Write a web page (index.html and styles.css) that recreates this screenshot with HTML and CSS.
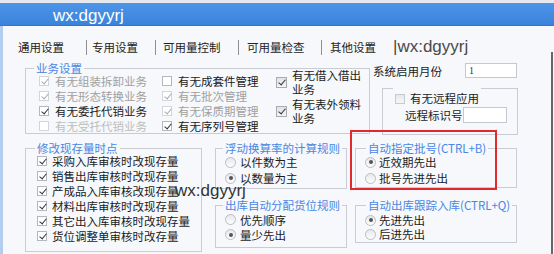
FILE: index.html
```html
<!DOCTYPE html>
<html lang="zh-CN">
<head>
<meta charset="utf-8">
<title>通用设置</title>
<link rel="stylesheet" href="styles.css">
</head>
<body>
<div class="strip"></div>
<div class="titlebar">wx:dgyyrj</div>
<div class="main">
  <div class="tabs">
    <span class="tab t1">通用设置</span><span class="sep"></span>
    <span class="tab t2">专用设置</span><span class="sep"></span>
    <span class="tab t3">可用量控制</span><span class="sep"></span>
    <span class="tab t4">可用量检查</span><span class="sep"></span>
    <span class="tab t5">其他设置</span>
    <span class="tab-wm">|wx:dgyyrj</span>
  </div>
  <div class="content">
    <div class="row-a">
      <fieldset class="grp biz">
        <legend>业务设置</legend>
        <div class="biz-grid">
          <div class="col">
            <div class="ck dis"><span class="cb on"></span>有无组装拆卸业务</div>
            <div class="ck dis"><span class="cb on"></span>有无形态转换业务</div>
            <div class="ck"><span class="cb on"></span>有无委托代销业务</div>
            <div class="ck dis light"><span class="cb"></span>有无受托代销业务</div>
          </div>
          <div class="col">
            <div class="ck"><span class="cb"></span>有无成套件管理</div>
            <div class="ck dis"><span class="cb on"></span>有无批次管理</div>
            <div class="ck dis"><span class="cb on"></span>有无保质期管理</div>
            <div class="ck"><span class="cb on"></span>有无序列号管理</div>
          </div>
          <div class="col c3">
            <div class="ck two"><span class="cb on big"></span><span>有无借入借出<br>业务</span></div>
            <div class="ck two"><span class="cb on big"></span><span>有无表外领料<br>业务</span></div>
          </div>
        </div>
      </fieldset>
      <div class="side">
        <div class="month"><span class="lbl">系统启用月份</span><span class="inp">1</span></div>
        <fieldset class="grp remote">
          <legend><span class="cb soft"></span>有无远程应用</legend>
          <div class="rid"><span class="lbl2">远程标识号</span><span class="inp w44"></span></div>
        </fieldset>
      </div>
    </div>
    <div class="row-b">
      <fieldset class="grp stock">
        <legend>修改现存量时点</legend>
        <div class="ck"><span class="cb on"></span>采购入库审核时改现存量</div>
        <div class="ck"><span class="cb on"></span>销售出库审核时改现存量</div>
        <div class="ck"><span class="cb on"></span>产成品入库审核改现存量</div>
        <div class="ck"><span class="cb on"></span>材料出库审核时改现存量</div>
        <div class="ck"><span class="cb on"></span>其它出入库审核时改现存量</div>
        <div class="ck"><span class="cb on"></span>货位调整单审核时改存量</div>
      </fieldset>
      <div class="mid">
        <fieldset class="grp float">
          <legend>浮动换算率的计算规则</legend>
          <div class="rd"><span class="rb"></span>以件数为主</div>
          <div class="rd"><span class="rb on"></span>以数量为主</div>
        </fieldset>
        <fieldset class="grp alloc">
          <legend>出库自动分配货位规则</legend>
          <div class="rd r14"><span class="rb"></span>优先顺序</div>
          <div class="rd r14"><span class="rb on"></span>量少先出</div>
        </fieldset>
      </div>
      <div class="rt">
        <fieldset class="grp batch">
          <legend>自动指定批号(CTRL+B)</legend>
          <div class="rd"><span class="rb on"></span>近效期先出</div>
          <div class="rd"><span class="rb"></span>批号先进先出</div>
        </fieldset>
        <fieldset class="grp track">
          <legend>自动出库跟踪入库(CTRL+Q)</legend>
          <div class="rd"><span class="rb on"></span>先进先出</div>
          <div class="rd"><span class="rb"></span>后进先出</div>
        </fieldset>
      </div>
    </div>
    <div class="mark"></div>
    <div class="wm">wx:dgyyrj</div>
  </div>
</div>
</body>
</html>
```
FILE: styles.css
```css
* { box-sizing: border-box; }
html, body { margin: 0; }
body {
  width: 554px;
  height: 254px;
  overflow: hidden;
  background: #f6f8fb;
  font-family: "Noto Sans CJK SC", "Microsoft YaHei", sans-serif;
  font-size: 11.5px;
  color: #1b1b1b;
}
.strip { height: 3px; background: #e6eaef; }
.titlebar {
  height: 23px;
  padding: 2px 0 0 53px;
  background: linear-gradient(#4d95e8, #3a83dc);
  border-bottom: 1px solid #3574c8;
  color: #fff;
  font: 17px/21px "Liberation Sans", sans-serif;
}
.main {
  height: 228px;
  display: flex;
  flex-direction: column;
  border-left: 3px solid #b3cdef;
}
.tabs {
  height: 26px;
  flex: none;
  display: flex;
  align-items: flex-start;
  padding: 13px 0 0 15px;
}
.tab { line-height: 16px; color: #222; }
.t1 { width: 68px; }
.t2 { width: 68px; padding-left: 5px; }
.t3 { width: 82px; padding-left: 7px; }
.t4 { width: 82px; padding-left: 8px; }
.t5 { width: 71px; padding-left: 8px; }
.sep { width: 1px; height: 15px; margin-top: 1px; background: #8f8f8f; }
.tab-wm { font: 17px/16px "Liberation Sans", sans-serif; color: #4a4a4a; }

.content {
  flex: 1;
  position: relative;
  margin-right: 1px;
  border-right: 2px solid #666;
  padding: 11px 0 0 22px;
}
.row-a { display: flex; align-items: flex-start; }
.row-b { display: flex; align-items: flex-start; margin-top: 8px; }

.grp {
  margin: 0;
  padding: 0;
  min-width: 0;
  border: 1px solid #c9cdd3;
}
.grp > legend {
  margin-left: 8px;
  padding: 0 2px;
  line-height: 10px;
  white-space: nowrap;
  color: #4a86e4;
}

.biz { width: 345px; }
.biz-grid {
  display: grid;
  grid-template-columns: 123px 114px 1fr;
  padding-left: 13px;
}
.ck {
  display: flex;
  align-items: center;
  gap: 6px;
  height: 15px;
  white-space: nowrap;
}
.cb {
  position: relative;
  flex: none;
  display: inline-block;
  width: 10px;
  height: 10px;
  border: 1px solid #b3b8bf;
  background: #fff;
}
.cb.on::after {
  content: "";
  position: absolute;
  left: 2.5px;
  top: 0;
  width: 3px;
  height: 6px;
  border: solid #333;
  border-width: 0 1.5px 1.5px 0;
  transform: rotate(40deg);
}
.dis { color: #a0a0a0; }
.dis .cb { border-color: #d2d5da; }
.dis .cb.on::after { border-color: #a9a9a9; }
.light { color: #bdbdbd; }
.c3 { margin-top: -5px; display: flex; flex-direction: column; gap: 1px; }
.ck.two { height: 28px; line-height: 14px; gap: 5px; }
.cb.big {
  width: 11px;
  height: 11px;
  border-color: #a7abb2;
  background: linear-gradient(#e2e3e5, #f3f4f5);
}

.side { width: 148px; margin-left: 2px; }
.month { display: flex; align-items: center; height: 15px; padding-left: 1px; }
.lbl { width: 92px; }
.inp {
  display: inline-block;
  width: 52px;
  height: 15px;
  border: 1px solid #c5c9cf;
  background: #fff;
  padding-left: 3px;
  font: 10px/13px "Liberation Serif", serif;
  color: #333;
}
.inp.w44 { width: 44px; height: 16px; }
.remote { width: 136px; margin: -7px 0 0 10px; }
.remote > legend {
  margin-left: 10px;
  padding: 20px 2px 0;
  line-height: 14px;
  color: #1b1b1b;
}
.remote > legend .cb { vertical-align: -1px; margin-right: 5px; }
.cb.soft { border-color: #c6c9ce; background: linear-gradient(#e6e7e9, #f7f7f8); }
.rid { display: flex; align-items: center; padding: 0 0 11px 22px; margin-top: 2px; }
.lbl2 { width: 58px; }

.stock { width: 177px; padding: 0 0 8px 11px; }
.stock > legend { margin-left: -2px; }
.stock .ck { gap: 5px; }

.mid { width: 132px; margin-left: 13px; }
.float { padding: 1px 0 2px 9px; }
.alloc { margin-top: 11px; padding: 2px 0 5px 9px; }
.float > legend, .alloc > legend { margin-left: -2px; }

.rd { display: flex; align-items: center; gap: 4px; height: 16px; white-space: nowrap; }
.rd.r14 { height: 15px; }
.rb {
  position: relative;
  flex: none;
  width: 11px;
  height: 11px;
  border-radius: 50%;
  border: 1px solid #b9bdc4;
  background: linear-gradient(#e6e8eb, #fdfdfd);
}
.rb.on::after {
  content: "";
  position: absolute;
  left: 2.5px;
  top: 2.5px;
  width: 4px;
  height: 4px;
  border-radius: 50%;
  background: #555;
}

.rt { width: 162px; margin-left: 8px; }
.batch { padding: 1px 0 1px 9px; }
.track { margin-top: 12px; padding: 3px 0 1px 9px; }
.batch > legend, .track > legend { margin-left: 1px; }
.batch .rd, .track .rd { gap: 3px; }
.track .rd { height: 14px; }

.mark {
  position: absolute;
  left: 347px;
  top: 78px;
  width: 147px;
  height: 60px;
  border: 2px solid #e2292d;
}
.wm {
  position: absolute;
  left: 172px;
  top: 129px;
  font: 17px/20px "Liberation Sans", sans-serif;
  color: #333;
}
```
